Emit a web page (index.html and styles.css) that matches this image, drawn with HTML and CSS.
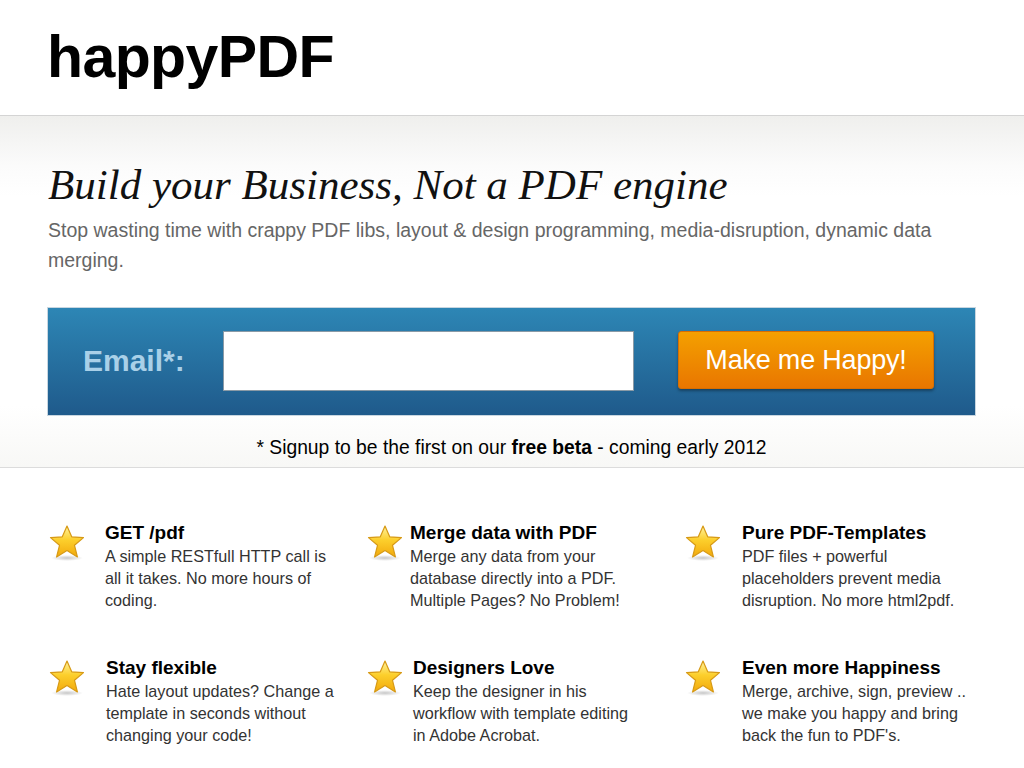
FILE: index.html
```html
<!DOCTYPE html>
<html>
<head>
<meta charset="utf-8">
<title>happyPDF</title>
<link rel="stylesheet" href="styles.css">
</head>
<body>
<svg width="0" height="0" class="defs">
  <defs>
    <linearGradient id="sg" x1="0" y1="0" x2="0" y2="1">
      <stop offset="0" stop-color="#fff3a0"/>
      <stop offset="0.45" stop-color="#fccf2c"/>
      <stop offset="1" stop-color="#f2a90c"/>
    </linearGradient>
    <radialGradient id="sh" cx="0.5" cy="0.5" r="0.5">
      <stop offset="0" stop-color="#000" stop-opacity="0.22"/>
      <stop offset="1" stop-color="#000" stop-opacity="0"/>
    </radialGradient>
    <symbol id="star" viewBox="0 0 38 38">
      <ellipse cx="19" cy="34" rx="16" ry="3" fill="url(#sh)"/>
      <path d="M19 2 L23.7 12.8 L35.5 13.6 L26.5 21.3 L29.4 33 L19 26.6 L8.6 33 L11.5 21.3 L2.5 13.6 L14.3 12.8 Z" fill="url(#sg)" stroke="#d79a16" stroke-width="1.2" stroke-linejoin="round"/>
    </symbol>
  </defs>
</svg>
<header class="top">
  <h1 class="logo">happyPDF</h1>
</header>
<section class="hero">
  <h2 class="tagline">Build your Business, Not a PDF engine</h2>
  <p class="lead">Stop wasting time with crappy PDF libs, layout &amp; design programming, media-disruption, dynamic data merging.</p>
  <form class="signup">
    <label class="signup-label" for="email">Email*:</label>
    <input class="signup-input" id="email" type="text">
    <button class="signup-btn" type="button">Make me Happy!</button>
  </form>
  <p class="note">* Signup to be the first on our <b>free beta</b> - coming early 2012</p>
</section>
<section class="features">
  <div class="feature c1">
    <svg class="star"><use href="#star"/></svg>
    <div class="ftext"><h3>GET /pdf</h3><p>A simple RESTfull HTTP call is all it takes. No more hours of coding.</p></div>
  </div>
  <div class="feature c2">
    <svg class="star"><use href="#star"/></svg>
    <div class="ftext"><h3>Merge data with PDF</h3><p>Merge any data from your database directly into a PDF. Multiple Pages? No Problem!</p></div>
  </div>
  <div class="feature c3">
    <svg class="star"><use href="#star"/></svg>
    <div class="ftext"><h3>Pure PDF-Templates</h3><p>PDF files + powerful placeholders prevent media disruption. No more html2pdf.</p></div>
  </div>
  <div class="feature c1 r2">
    <svg class="star"><use href="#star"/></svg>
    <div class="ftext"><h3>Stay flexible</h3><p>Hate layout updates? Change a template in seconds without changing your code!</p></div>
  </div>
  <div class="feature c2 r2">
    <svg class="star"><use href="#star"/></svg>
    <div class="ftext"><h3>Designers Love</h3><p>Keep the designer in his workflow with template editing in Adobe Acrobat.</p></div>
  </div>
  <div class="feature c3 r2">
    <svg class="star"><use href="#star"/></svg>
    <div class="ftext"><h3>Even more Happiness</h3><p>Merge, archive, sign, preview .. we make you happy and bring back the fun to PDF's.</p></div>
  </div>
</section>
</body>
</html>
```
FILE: styles.css
```css
* { box-sizing: border-box; }
html, body { margin: 0; padding: 0; background: #fff; }
body { font-family: "Liberation Sans", Arial, sans-serif; color: #000; }
.defs { position: absolute; width: 0; height: 0; }

.top {
  height: 116px;
  border-bottom: 1px solid #d4d4d4;
  padding: 22px 0 0 47px;
}
.logo {
  margin: 0;
  font-size: 59px;
  line-height: 70px;
  font-weight: bold;
  letter-spacing: -0.6px;
}

.hero {
  background: linear-gradient(#efefed 0px, #fbfbfb 50px, #fff 80px, #fff 290px, #f8f8f6 350px);
  border-bottom: 1px solid #dcdcdc;
  padding: 45px 48px 0 47px;
  height: 352px;
}
.tagline {
  margin: 0 0 0 1px;
  font-family: "Liberation Serif", "Times New Roman", serif;
  font-style: italic;
  font-weight: normal;
  font-size: 43px;
  line-height: 48px;
  color: #111;
}
.lead {
  margin: 6px 0 0 1px;
  font-size: 19.5px;
  line-height: 30px;
  color: #666;
  max-width: 910px;
}
.signup {
  margin-top: 32px;
  height: 109px;
  display: flex;
  align-items: center;
  border: 1px solid #c8d6e0;
  background: linear-gradient(#2d86b5, #1f5a8b);
  padding: 0 0 0 35px;
}
.signup-label {
  font-size: 30px;
  font-weight: bold;
  color: #a9d0e8;
  width: 140px;
  margin-top: -2px;
}
.signup-input {
  width: 411px;
  height: 60px;
  border: 1px solid #8a9aa6;
  background: #fff;
  margin: -2px 0 0 0;
}
.signup-btn {
  margin: -3px 0 0 44px;
  width: 256px;
  height: 58px;
  border: 1px solid #d96e00;
  border-radius: 3px;
  background: linear-gradient(#f4a000, #e97600);
  box-shadow: 0 2px 3px rgba(0,0,0,0.35);
  color: #fff;
  font-family: "Liberation Sans", Arial, sans-serif;
  font-size: 27px;
  padding: 0;
  letter-spacing: -0.2px;
}
.note {
  margin: 20px 0 0;
  text-align: center;
  font-size: 19.3px;
  line-height: 24px;
  color: #000;
}

.features {
  display: grid;
  grid-template-columns: 318px 318px 318px;
  row-gap: 22px;
  padding: 54px 0 0 48px;
}
.feature {
  display: flex;
  align-items: flex-start;
  height: 113px;
}
.star {
  width: 38px;
  height: 38px;
  flex: none;
  margin-top: 2px;
}
.ftext { flex: none; }
.c1 .ftext { margin-left: 19px; }
.c2 .ftext { margin-left: 6px; }
.c3 .ftext { margin-left: 20px; }
.c1.r2 .ftext { margin-left: 20px; }
.c2.r2 .ftext { margin-left: 9px; }
.ftext h3 {
  margin: 0;
  font-size: 19px;
  line-height: 22px;
  font-weight: bold;
  color: #000;
}
.ftext p {
  margin: 1px 0 0;
  font-size: 16.2px;
  line-height: 22px;
  color: #333;
  width: 232px;
}
.c1.r2 .ftext p { width: 256px; }
.c2.r2 .ftext p { width: 224px; }
```
